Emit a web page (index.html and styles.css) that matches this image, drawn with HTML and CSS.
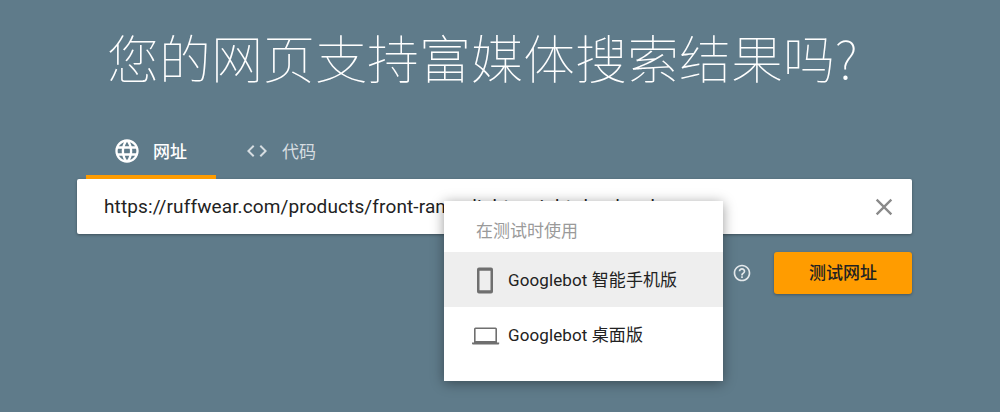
FILE: index.html
```html
<!DOCTYPE html>
<html lang="zh-CN">
<head>
<meta charset="utf-8">
<title>富媒体搜索结果测试</title>
<link rel="stylesheet" href="styles.css">
</head>
<body>
<main class="page">
  <h1 class="title">您的网页支持富媒体搜索结果吗?</h1>
  <div class="tabs">
    <div class="tab tab-active">
      <svg class="globe" viewBox="0 0 24 24" width="28" height="28"><path fill="#fff" d="M11.99 2C6.47 2 2 6.48 2 12s4.47 10 9.99 10C17.52 22 22 17.52 22 12S17.52 2 11.99 2zm6.93 6h-2.95c-.32-1.25-.78-2.45-1.38-3.56 1.84.63 3.37 1.91 4.33 3.56zM12 4.040c.83 1.2 1.48 2.53 1.91 3.96h-3.82c.43-1.43 1.08-2.76 1.91-3.96zM4.260 14C4.100 13.360 4 12.690 4 12s.1-1.360.26-2h3.380c-.08.66-.14 1.320-.14 2 0 .68.06 1.340.14 2H4.260zm.82 2h2.950c.32 1.250.78 2.450 1.380 3.560-1.840-.63-3.370-1.900-4.330-3.560zm2.950-8H5.080c.96-1.660 2.490-2.930 4.330-3.560C8.810 5.550 8.350 6.750 8.030 8zM12 19.960c-.83-1.200-1.480-2.530-1.910-3.960h3.820c-.43 1.430-1.080 2.760-1.910 3.960zM14.340 14H9.660c-.09-.66-.16-1.320-.16-2 0-.68.07-1.350.16-2h4.680c.09.65.16 1.320.16 2 0 .68-.07 1.340-.16 2zm.25 5.560c.6-1.110 1.060-2.310 1.380-3.560h2.950c-.96 1.650-2.490 2.930-4.330 3.560zM16.360 14c.08-.66.14-1.320.14-2 0-.68-.06-1.340-.14-2h3.380c.16.64.26 1.310.26 2s-.1 1.360-.26 2h-3.380z"/></svg>
      <span>网址</span>
    </div>
    <div class="tab tab-code">
      <svg class="code" viewBox="0 0 24 24" width="24" height="24"><path fill="#d6dde1" d="M9.400 16.600 4.800 12l4.600-4.600L8 6l-6 6 6 6 1.400-1.400zm5.200 0 4.600-4.600-4.600-4.600L16 6l6 6-6 6-1.400-1.400z"/></svg>
      <span>代码</span>
    </div>
  </div>
  <div class="field">
    <span class="url">https://ruffwear.com/products/front-range-light-weight-dog-leash</span>
    <svg class="clear" viewBox="0 0 24 24" width="28" height="28"><path fill="#8a8a8a" d="M19 6.410 17.590 5 12 10.590 6.410 5 5 6.410 10.590 12 5 17.590 6.410 19 12 13.410 17.590 19 19 17.590 13.410 12z"/></svg>
  </div>
  <div class="actions">
    <svg class="help" viewBox="0 0 24 24" width="20" height="20"><path fill="#e4e9ec" d="M11 18h2v-2h-2v2zm1-16C6.480 2 2 6.480 2 12s4.480 10 10 10 10-4.480 10-10S17.520 2 12 2zm0 18c-4.410 0-8-3.590-8-8s3.590-8 8-8 8 3.590 8 8-3.590 8-8 8zm0-14c-2.210 0-4 1.790-4 4h2c0-1.100.9-2 2-2s2 .9 2 2c0 2-3 1.750-3 5h2c0-2.250 3-2.500 3-5 0-2.210-1.790-4-4-4z"/></svg>
    <button class="submit">测试网址</button>
  </div>
  <div class="menu">
    <div class="menu-head">在测试时使用</div>
    <div class="menu-item menu-item-active">
      <svg class="menu-icon" viewBox="0 0 36 36" width="36" height="36"><path fill="#6f6f6f" fill-rule="evenodd" d="M11 5.500h12a2 2 0 0 1 2 2v22a2 2 0 0 1-2 2H11a2 2 0 0 1-2-2v-22a2 2 0 0 1 2-2zm.5 3.200v19.600h11V8.700z"/></svg>
      <span class="menu-label">Googlebot 智能手机版</span>
    </div>
    <div class="menu-item">
      <svg class="menu-icon" viewBox="0 0 36 36" width="36" height="36"><path fill="#6f6f6f" fill-rule="evenodd" d="M7.500 10.500h20a1.500 1.500 0 0 1 1.500 1.500v13.500H6V12a1.500 1.500 0 0 1 1.500-1.500zm.1 1.600v11.800h19.800V12.100zM4 25.500h27.200v1a1 1 0 0 1-1 1H5a1 1 0 0 1-1-1z"/></svg>
      <span class="menu-label">Googlebot 桌面版</span>
    </div>
  </div>
</main>
</body>
</html>
```

FILE: styles.css
```css
* { box-sizing: border-box; }
html, body { margin: 0; height: 100%; }
body {
  background: #5f7b8a;
  font-family: Roboto, "Noto Sans CJK SC", sans-serif;
  overflow: hidden;
}
.page {
  position: relative;
  width: 1000px;
  height: 412px;
  padding: 21px 88px 0 77px;
}
.title {
  margin: 0 0 0 30px;
  font-family: "Noto Sans CJK SC", sans-serif;
  font-weight: 100;
  font-size: 52px;
  line-height: 72px;
  color: #fff;
  white-space: nowrap;
}
.tabs {
  display: flex;
  margin: 29px 0 0 9px;
  height: 57px;
}
.tab {
  display: flex;
  align-items: center;
  gap: 12px;
  height: 57px;
  padding: 0 28px 0 27px;
  color: #d6dde1;
  font-size: 17px;
  font-weight: 500;
}
.tab-code {
  gap: 13px;
  padding-left: 29px;
  font-weight: 400;
}
.tab-active {
  width: 130px;
  color: #fff;
  border-bottom: 4px solid #ff9c00;
  padding-top: 4px;
}
.field {
  display: flex;
  align-items: center;
  justify-content: space-between;
  height: 55px;
  padding: 0 14px 0 27px;
  background: #fff;
  border-radius: 2px;
  box-shadow: 0 1px 3px rgba(0,0,0,.35);
}
.url {
  font-size: 19px;
  letter-spacing: .12px;
  color: #222;
  white-space: nowrap;
}
.actions {
  display: flex;
  justify-content: flex-end;
  align-items: center;
  gap: 22px;
  margin-top: 18px;
}
.help { display: block; }
.submit {
  width: 138px;
  height: 42px;
  padding: 0 0 3px;
  border: 0;
  border-radius: 3px;
  background: #ff9c00;
  color: #222;
  font: 500 17px Roboto, "Noto Sans CJK SC", sans-serif;
  box-shadow: 0 1px 3px rgba(0,0,0,.3);
}
.menu {
  position: absolute;
  left: 444px;
  top: 201px;
  width: 279px;
  height: 180px;
  background: #fff;
  box-shadow: 0 2px 12px rgba(0,0,0,.4);
}
.menu-head {
  height: 51px;
  padding: 20px 0 0 32px;
  font-size: 17px;
  line-height: 20px;
  color: #9a9a9a;
}
.menu-item {
  display: flex;
  align-items: center;
  gap: 4px;
  height: 55px;
  padding-left: 24px;
  font-size: 17px;
  letter-spacing: .1px;
  color: #222;
}
.menu-label { margin-bottom: 2px; }
.menu-item-active { background: #eee; }
.menu-icon { display: block; }
```
